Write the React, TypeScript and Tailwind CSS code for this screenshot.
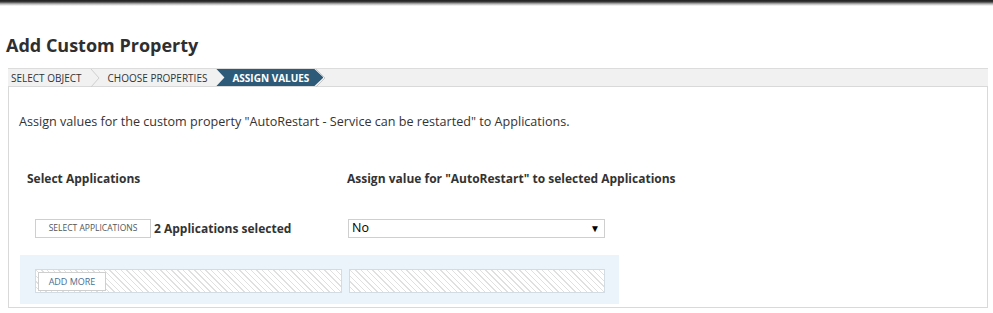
import React from 'react';

function Chevron() {
  return (
    <svg width="11" height="18" viewBox="0 0 11 18" className="shrink-0">
      <polyline points="1,0 9,9 1,18" fill="none" stroke="#cfcfcf" strokeWidth="1" />
    </svg>
  );
}

export default function App() {
  return (
    <div className="min-h-[313px] w-full bg-white text-[#333] font-['Open_Sans',sans-serif]">
      {/* top shadow bar */}
      <div className="h-[6px] bg-[linear-gradient(to_bottom,#1e1e1e_0%,#3a3a3a_30%,#b5b5b5_65%,#ffffff_100%)]" />

      <h1 className="mt-[27px] px-[6px] text-[18px] leading-[24px] font-bold text-[#2f2f2f]">Add Custom Property</h1>

      <div className="ml-[8px] mr-[5px] mt-[11px]">
        {/* wizard steps */}
        <div className="flex h-[18px] items-stretch border-t border-[#dcdcdc] bg-[#f1f1f1] text-[10px] leading-[18px] uppercase">
          <span className="pl-[3px] pr-[8px]">Select Object</span>
          <Chevron />
          <span className="pl-[7px] pr-[9px]">Choose Properties</span>
          <div className="w-[107px] bg-[#2c5a78] pl-[16px] font-bold text-white [clip-path:polygon(0_0,98px_0,100%_50%,98px_100%,0_100%,8px_50%)]">
            Assign Values
          </div>
          <svg width="11" height="18" viewBox="0 0 11 18" className="-ml-[8px] shrink-0">
            <polyline points="1,0 10,9 1,18" fill="none" stroke="#c8c8c8" strokeWidth="1" />
          </svg>
        </div>

        {/* panel */}
        <div className="h-[222px] border border-[#d9d9d9]">
          <p className="ml-[10px] pt-[27px] text-[12.6px] leading-[16px]">
            Assign values for the custom property "AutoRestart - Service can be restarted" to Applications.
          </p>

          <div className="ml-[18px] mt-[41px] flex text-[12px] font-bold leading-[16px]">
            <span className="w-[320px]">Select Applications</span>
            <span>Assign value for "AutoRestart" to selected Applications</span>
          </div>

          <div className="ml-[26px] mt-[32px] flex items-center">
            <div className="flex w-[313px] items-center">
              <button className="h-[19px] w-[116px] border border-[#cfcfcf] bg-white text-[8.5px] uppercase text-[#555]">
                Select Applications
              </button>
              <span className="ml-[3px] text-[12px] font-bold">2 Applications selected</span>
            </div>
            <div className="flex h-[19px] w-[257px] items-center justify-between border border-[#cfcfcf] bg-white pl-[3px] pr-[4px] text-[12.5px] text-black">
              <span>No</span>
              <span className="text-[10px]">▼</span>
            </div>
          </div>

          <div className="ml-[11px] mt-[17px] h-[49px] w-[599px] bg-[#ecf4fb] pl-[15px] pt-[14px]">
            <div className="flex gap-[7px]">
              <div className="h-[24px] w-[307px] border border-[#d3dbe3] bg-[repeating-linear-gradient(45deg,#ffffff_0px,#ffffff_3px,#e0e0e0_3px,#e0e0e0_4px)] pl-[2px] pt-[2px]">
                <button className="block h-[19px] w-[68px] border border-[#cfcfcf] bg-white text-[9px] uppercase text-[#4b6e8d]">
                  Add More
                </button>
              </div>
              <div className="h-[24px] w-[256px] border border-[#d3dbe3] bg-[repeating-linear-gradient(45deg,#ffffff_0px,#ffffff_3px,#e0e0e0_3px,#e0e0e0_4px)]" />
            </div>
          </div>
        </div>
      </div>
    </div>
  );
}
